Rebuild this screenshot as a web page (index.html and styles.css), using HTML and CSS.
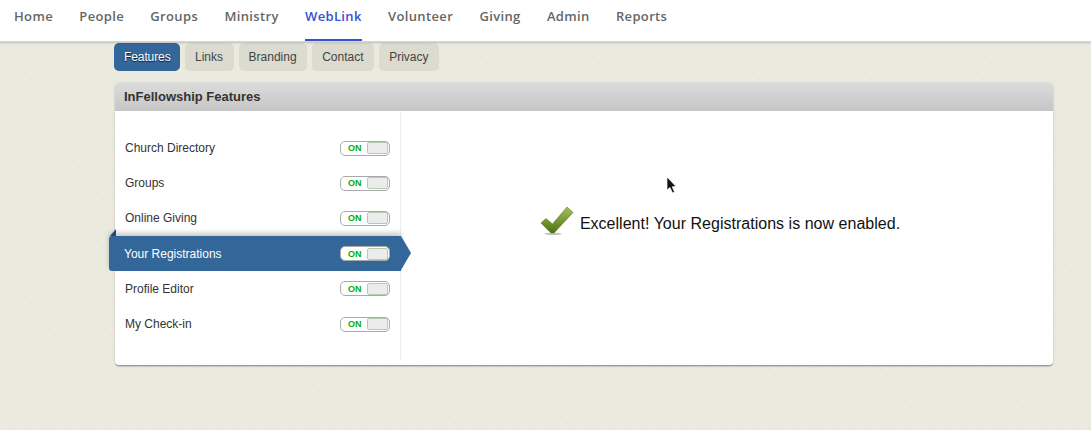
FILE: index.html
```html
<!DOCTYPE html>
<html lang="en">
<head>
    <meta charset="UTF-8">
    <meta name="viewport" content="width=device-width, initial-scale=1.0">
    <title>WebLink Features</title>
    <link rel="stylesheet" href="styles.css">
</head>
<body>
    <nav class="topnav">
        <a href="#">Home</a>
        <a href="#">People</a>
        <a href="#">Groups</a>
        <a href="#">Ministry</a>
        <a href="#" class="current">WebLink</a>
        <a href="#">Volunteer</a>
        <a href="#">Giving</a>
        <a href="#">Admin</a>
        <a href="#">Reports</a>
    </nav>

    <main class="content">
        <div class="tabs">
            <a href="#" class="tab active">Features</a>
            <a href="#" class="tab">Links</a>
            <a href="#" class="tab">Branding</a>
            <a href="#" class="tab">Contact</a>
            <a href="#" class="tab">Privacy</a>
        </div>

        <section class="panel">
            <h2 class="panel-title">InFellowship Features</h2>
            <div class="panel-body">
                <ul class="features">
                    <li class="feature"><span>Church Directory</span><span class="toggle"><b>ON</b><i></i></span></li>
                    <li class="feature"><span>Groups</span><span class="toggle"><b>ON</b><i></i></span></li>
                    <li class="feature"><span>Online Giving</span><span class="toggle"><b>ON</b><i></i></span></li>
                    <li class="feature selected"><span>Your Registrations</span><span class="toggle"><b>ON</b><i></i></span></li>
                    <li class="feature"><span>Profile Editor</span><span class="toggle"><b>ON</b><i></i></span></li>
                    <li class="feature"><span>My Check-in</span><span class="toggle"><b>ON</b><i></i></span></li>
                </ul>
                <div class="message">
                    <svg class="check" width="34" height="30" viewBox="0 0 34 30">
                        <defs>
                            <linearGradient id="checkFill" x1="0" y1="0" x2="0" y2="1">
                                <stop offset="0" stop-color="#a3bf62"/>
                                <stop offset="0.5" stop-color="#789a36"/>
                                <stop offset="1" stop-color="#4f7016"/>
                            </linearGradient>
                        </defs>
                        <ellipse cx="13" cy="27.8" rx="9" ry="1.2" fill="#c4c4c4"/>
                        <path d="M1 17 L6 12.5 L12.5 18 L27 1 L33 6.5 L14 27 L11 27 Z" fill="url(#checkFill)" stroke="#587a22" stroke-width="0.6"/>
                    </svg>
                    <span>Excellent! Your Registrations is now enabled.</span>
                </div>
            </div>
        </section>
    </main>

    <svg class="cursor" width="12" height="19" viewBox="0 0 12 19">
        <path d="M1 1 L1 14 L4 11.5 L6.5 17 L8.5 16 L6.2 10.8 L10 10.5 Z" fill="#111" stroke="#fff" stroke-width="0.7"/>
    </svg>
</body>
</html>
```
FILE: styles.css
```css
body {
    margin: 0;
    height: 430px;
    overflow: hidden;
    font-family: "Liberation Sans", Arial, sans-serif;
    background-color: #eaeadf;
    background-image:
        repeating-linear-gradient(125deg, rgba(255, 255, 255, 0.06) 0 1px, rgba(0, 0, 0, 0) 1px 13px),
        repeating-linear-gradient(40deg, rgba(0, 0, 0, 0.01) 0 1px, rgba(255, 255, 255, 0) 1px 9px);
    position: relative;
}

.topnav {
    display: flex;
    gap: 26.3px;
    height: 41px;
    padding-left: 14px;
    background: #fff;
    border-bottom: 1px solid #d4d4d0;
    box-shadow: 0 1px 2px rgba(0, 0, 0, 0.18);
    position: relative;
}

.topnav a {
    display: block;
    height: 39px;
    line-height: 32px;
    font-family: "Open Sans", sans-serif;
    font-size: 13px;
    font-weight: 600;
    letter-spacing: 0.35px;
    color: #666;
    text-decoration: none;
}

.topnav a.current {
    color: #3650d8;
    border-bottom: 2px solid #3650d8;
}

.content {
    width: 940px;
    margin-left: 114px;
}

.tabs {
    display: flex;
    gap: 5px;
    margin-top: 1px;
}

.tab {
    height: 28px;
    line-height: 28px;
    padding: 0 10.6px 0 10px;
    font-size: 12px;
    color: #444;
    text-decoration: none;
    background: #dbdbcf;
    border-radius: 5px;
}

.tab.active {
    padding: 0 9.4px 0 10px;
    color: #fff;
    letter-spacing: -0.1px;
    background: #336699;
    text-shadow: 0 1px 1px rgba(0, 0, 0, 0.7);
}

.panel {
    margin-top: 11px;
    height: 283px;
    background: #fff;
    border: 1px solid #d8d8d0;
    border-top: 0;
    border-bottom: 1px solid #999;
    border-radius: 5px;
    box-shadow: 0 1px 1px rgba(0, 0, 0, 0.15);
}

.panel-title {
    margin: 0;
    height: 29px;
    line-height: 29px;
    padding-left: 9px;
    font-size: 13px;
    font-weight: bold;
    color: #333;
    background: linear-gradient(to bottom, #dcdcdc, #c6c6c6);
    border-radius: 5px 5px 0 0;
}

.panel-body {
    display: flex;
    height: 250px;
}

.features {
    list-style: none;
    width: 285px;
    margin: 0;
    padding: 19.5px 0 0;
    border-right: 1px solid #eee;
}

.feature {
    display: flex;
    justify-content: space-between;
    align-items: center;
    height: 35.2px;
    padding: 0 10px 0 10px;
    font-size: 12px;
    color: #333;
}

.feature.selected {
    position: relative;
    margin: 0 -1px 0 -6px;
    padding: 0 11px 0 15px;
    color: #fff;
    background: #336699;
    border-radius: 3px 0 0 3px;
    box-shadow: 0 -3px 5px rgba(0, 0, 0, 0.22);
}

/* arrow on the right edge */
.feature.selected::after {
    content: "";
    position: absolute;
    left: 100%;
    top: 0;
    border-style: solid;
    border-width: 17.6px 0 17.6px 10px;
    border-color: transparent transparent transparent #336699;
}

/* little fold on the top left */
.feature.selected::before {
    content: "";
    position: absolute;
    left: 1px;
    top: -7px;
    border-style: solid;
    border-width: 0 0 7px 6px;
    border-color: transparent transparent #234a72 transparent;
}

.toggle {
    display: flex;
    align-items: center;
    justify-content: space-between;
    box-sizing: border-box;
    width: 50px;
    height: 15px;
    padding: 0 1px 0 7px;
    background: #fff;
    border: 1px solid #aaa;
    border-radius: 5px;
}

.toggle b {
    font-size: 9px;
    color: #00b000;
}

.toggle i {
    display: block;
    width: 19px;
    height: 10px;
    background: #ececec;
    border: 1px solid #b5cbb0;
    border-radius: 2px;
}

.message {
    flex: 1;
    display: flex;
    justify-content: center;
    align-items: flex-start;
    gap: 6px;
    padding: 95px 14px 0 0;
    font-size: 16px;
    letter-spacing: 0.02px;
    color: #111;
}

.message span {
    margin-top: 9px;
}

.cursor {
    position: absolute;
    left: 666px;
    top: 176px;
}
```
